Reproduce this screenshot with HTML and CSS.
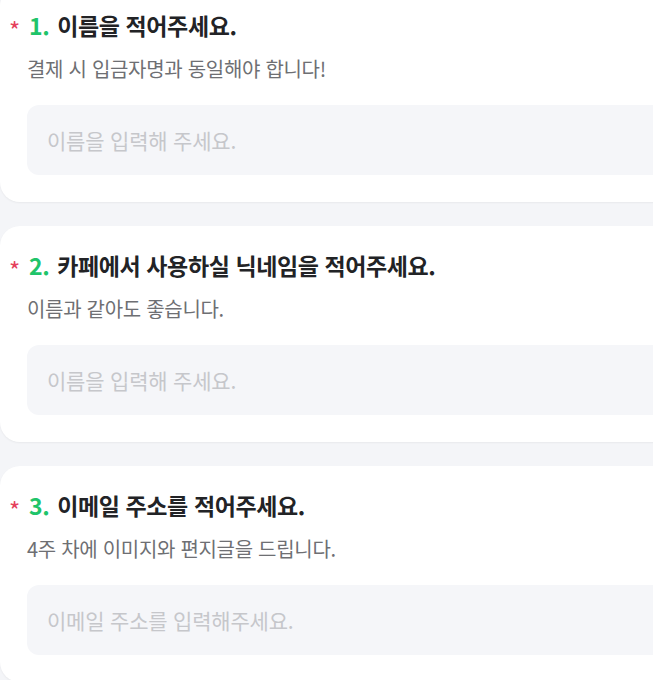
FILE: index.html
```html
<!DOCTYPE html>
<html lang="ko">
<head>
<meta charset="utf-8">
<link rel="stylesheet" href="styles.css">
</head>
<body>
<main class="form">
  <section class="card">
    <h2 class="q-title"><span class="req">*</span><span class="num">1.</span><span class="text">이름을 적어주세요.</span></h2>
    <p class="q-desc">결제 시 입금자명과 동일해야 합니다!</p>
    <div class="field"><span class="placeholder">이름을 입력해 주세요.</span></div>
  </section>
  <section class="card">
    <h2 class="q-title"><span class="req">*</span><span class="num">2.</span><span class="text">카페에서 사용하실 닉네임을 적어주세요.</span></h2>
    <p class="q-desc">이름과 같아도 좋습니다.</p>
    <div class="field"><span class="placeholder">이름을 입력해 주세요.</span></div>
  </section>
  <section class="card">
    <h2 class="q-title"><span class="req">*</span><span class="num">3.</span><span class="text">이메일 주소를 적어주세요.</span></h2>
    <p class="q-desc">4주 차에 이미지와 편지글을 드립니다.</p>
    <div class="field"><span class="placeholder">이메일 주소를 입력해주세요.</span></div>
  </section>
</main>
</body>
</html>
```
FILE: styles.css
```css
html, body {
  margin: 0;
  padding: 0;
  background: #f4f5f8;
  overflow: hidden;
  font-family: "Noto Sans CJK KR", "Noto Sans", sans-serif;
}
.form {
  display: flex;
  flex-direction: column;
  gap: 24px;
  margin-top: -14px;
  width: 720px;
}
.card {
  background: #ffffff;
  border-radius: 20px;
  padding: 24px 0 27px 27px;
  box-shadow: 0 1px 2px rgba(0, 0, 0, 0.05);
}
.q-title {
  display: flex;
  align-items: center;
  height: 30px;
  margin: 0 0 0 -17px;
  font-size: 23px;
  line-height: 30px;
  font-weight: 700;
  color: #222326;
  letter-spacing: -0.4px;
}
.req {
  color: #e5405b;
  font-size: 24px;
  line-height: 30px;
  font-weight: 400;
  width: 19px;
  transform: translate(-1px, 5px);
}
.num {
  color: #1fc46a;
  margin-right: 8px;
}
.q-desc {
  margin: 16px 0 0;
  font-size: 20px;
  line-height: 26px;
  color: #6e6f73;
  letter-spacing: -0.3px;
}
.field {
  margin-top: 23px;
  height: 70px;
  background: #f5f6f9;
  border-radius: 12px;
  display: flex;
  align-items: center;
  padding-left: 20px;
}
.placeholder {
  font-size: 21px;
  color: #c6c7cb;
  letter-spacing: -0.2px;
}
```
